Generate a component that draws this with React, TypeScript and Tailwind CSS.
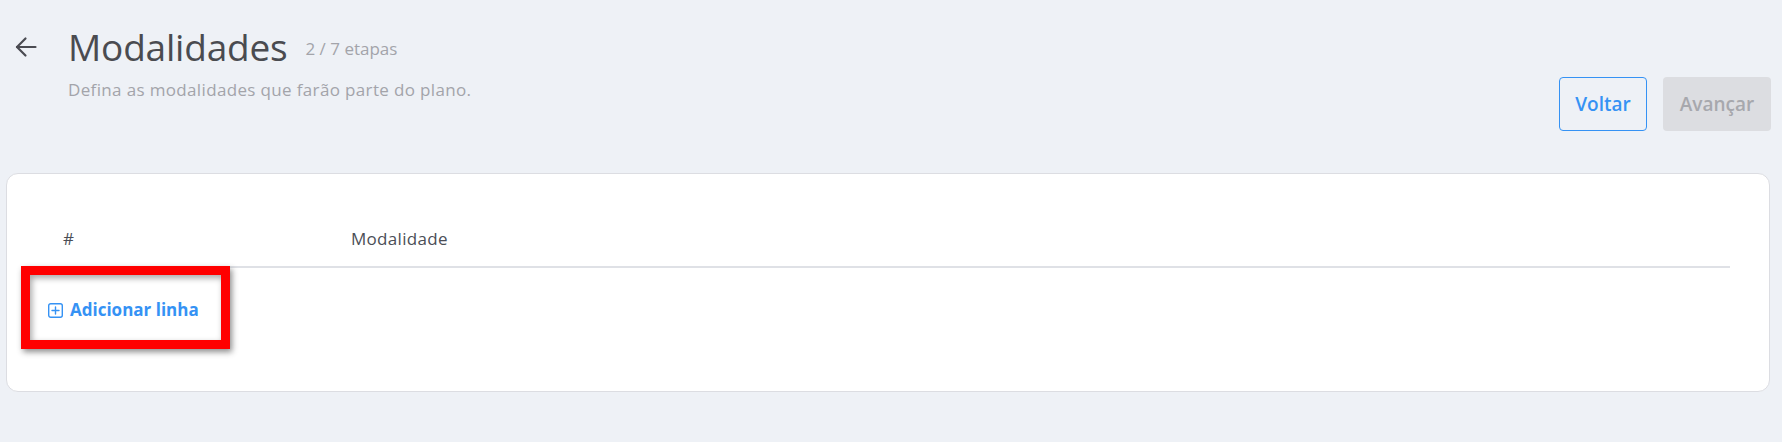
const FONT = "font-['Open_Sans','Noto_Sans',sans-serif]"

function BackArrow() {
  return (
    <svg width="22" height="22" viewBox="0 0 22 22" fill="none" stroke="#4a4b52" strokeWidth="2.2" strokeLinecap="round" strokeLinejoin="round">
      <path d="M20.5 11H2" />
      <path d="M10.5 2.5 2 11l8.5 8.5" />
    </svg>
  )
}

function PlusSquare() {
  return (
    <svg width="15" height="15" viewBox="0 0 15 15" fill="none" stroke="#3592f4" strokeWidth="1.4" strokeLinecap="round">
      <rect x="0.7" y="0.7" width="13.6" height="13.6" rx="2" />
      <path d="M7.5 4v7M4 7.5h7" />
    </svg>
  )
}

export default function App() {
  return (
    <div className={`w-full h-[442px] bg-[#eef1f6] ${FONT}`}>
      {/* Header */}
      <div className="flex items-start justify-between pt-[24px] pr-[11px]">
        <div className="flex items-start pl-[15px]">
          <div className="mt-[12px]">
            <BackArrow />
          </div>
          <div className="ml-[31px]">
            <div className="flex items-center gap-[18px]">
              <h1 className="text-[37px] leading-[46px] text-[#4a4b50] tracking-[-0.2px]">Modalidades</h1>
              <span className="text-[17px] leading-[24px] text-[#a3a4aa] mt-[3px]">2 / 7 etapas</span>
            </div>
            <p className="mt-[8px] text-[17px] leading-[24px] tracking-[0.35px] text-[#a3a4aa]">
              Defina as modalidades que farão parte do plano.
            </p>
          </div>
        </div>
        <div className="flex gap-[16px] mt-[53px]">
          <button className="h-[54px] w-[88px] rounded-[4px] border border-[#3592f4] text-[#3592f4] text-[19px] font-semibold">
            Voltar
          </button>
          <button className="h-[54px] w-[108px] rounded-[4px] bg-[#dcdde1] text-[#a7a8ad] text-[19px] font-semibold">
            Avançar
          </button>
        </div>
      </div>

      {/* Card */}
      <div className="relative mt-[42px] ml-[6px] mr-[12px] h-[219px] rounded-[12px] border border-[#dcdde2] bg-white px-[39px]">
        <div className="flex pt-[53px] pb-[15px] border-b-2 border-[#dfe1e6] text-[17px] leading-[24px] text-[#4b4e56]">
          <div className="w-[288px] px-[17px]">#</div>
          <div className="px-[17px] tracking-[0.3px]">Modalidade</div>
        </div>
        <button className="mt-[30px] ml-[2px] flex items-center gap-[7px] text-[17px] leading-[24px] font-bold text-[#3592f4]">
          <PlusSquare />
          Adicionar linha
        </button>

        {/* annotation */}
        <div className="absolute left-[14px] top-[92px] w-[209px] h-[83px] border-[9px] border-[#ff0000] shadow-[2px_3px_6px_rgba(0,0,0,0.45),inset_2px_3px_6px_rgba(0,0,0,0.35)]" />
      </div>
    </div>
  )
}
